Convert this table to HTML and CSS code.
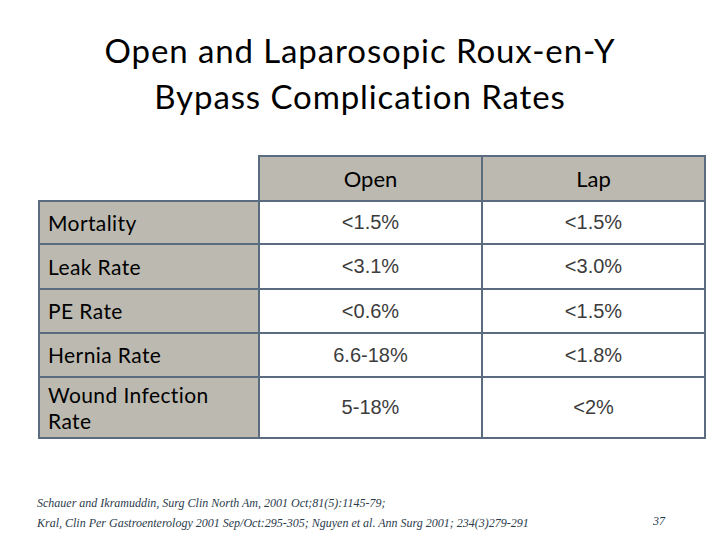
FILE: index.html
```html
<!DOCTYPE html>
<html>
<head>
<meta charset="utf-8">
<link rel="stylesheet" href="styles.css">
</head>
<body>
<div class="slide">
  <h1 class="title">Open and Laparosopic Roux-en-Y<br>Bypass Complication Rates</h1>
  <table class="rates">
    <tr class="head">
      <td class="blank"></td>
      <th>Open</th>
      <th>Lap</th>
    </tr>
    <tr class="r1"><th class="label">Mortality</th><td>&lt;1.5%</td><td>&lt;1.5%</td></tr>
    <tr class="r2"><th class="label">Leak Rate</th><td>&lt;3.1%</td><td>&lt;3.0%</td></tr>
    <tr class="r3"><th class="label">PE Rate</th><td>&lt;0.6%</td><td>&lt;1.5%</td></tr>
    <tr class="r4"><th class="label">Hernia Rate</th><td>6.6-18%</td><td>&lt;1.8%</td></tr>
    <tr class="r5"><th class="label">Wound Infection<br>Rate</th><td>5-18%</td><td>&lt;2%</td></tr>
  </table>
  <div class="footer">
    <div class="refs">
      <div>Schauer and Ikramuddin, Surg Clin North Am, 2001 Oct;81(5):1145-79;</div>
      <div>Kral, Clin Per Gastroenterology 2001 Sep/Oct:295-305; Nguyen et al. Ann Surg 2001; 234(3)279-291</div>
    </div>
    <div class="page">37</div>
  </div>
</div>
</body>
</html>
```
FILE: styles.css
```css
html, body {
  margin: 0;
  padding: 0;
  background: #ffffff;
}
.slide {
  width: 720px;
  height: 540px;
  overflow: hidden;
  display: flex;
  flex-direction: column;
  font-variant-ligatures: none;
}
.title {
  margin: 27px 0 0 0;
  font-family: Lato, "Liberation Sans", sans-serif;
  font-weight: normal;
  font-size: 33px;
  letter-spacing: 0.9px;
  line-height: 46px;
  text-align: center;
  color: #000000;
}
.rates {
  margin: 36px 0 0 38px;
  border-collapse: collapse;
  table-layout: fixed;
  width: 661px;
}
.rates td, .rates th {
  border: 2px solid #5b6b80;
  padding: 0;
  vertical-align: middle;
}
.rates td.blank {
  border: none;
  width: 219px;
}
.head th {
  background: #bcbab0;
  font-family: Lato, "Liberation Sans", sans-serif;
  font-weight: normal;
  font-size: 22px;
  color: #000000;
  text-align: center;
  width: 221px;
}
.head { height: 45px; }
.r1 { height: 43px; }
.r2 { height: 45px; }
.r3 { height: 44px; }
.r4 { height: 44px; }
.r5 { height: 61px; }
.rates th.label {
  background: #bcbab0;
  font-family: Lato, "Liberation Sans", sans-serif;
  font-weight: normal;
  font-size: 21px;
  letter-spacing: 0.4px;
  line-height: 26px;
  color: #000000;
  text-align: left;
  padding-left: 8px;
}
.rates td {
  font-family: "Liberation Sans", Arial, sans-serif;
  font-size: 20px;
  color: #3c3c3c;
  text-align: center;
}
.footer {
  margin-top: 54px;
  display: flex;
  align-items: flex-end;
  padding-left: 37px;
  padding-right: 55px;
}
.refs {
  flex: 1;
  font-family: "Liberation Serif", serif;
  font-style: italic;
  font-size: 12px;
  line-height: 20px;
  color: #2b3b4c;
}
.page {
  font-family: "Liberation Serif", serif;
  font-style: italic;
  font-size: 12px;
  line-height: 20px;
  color: #1f3d4f;
  margin-bottom: 2px;
}
```
